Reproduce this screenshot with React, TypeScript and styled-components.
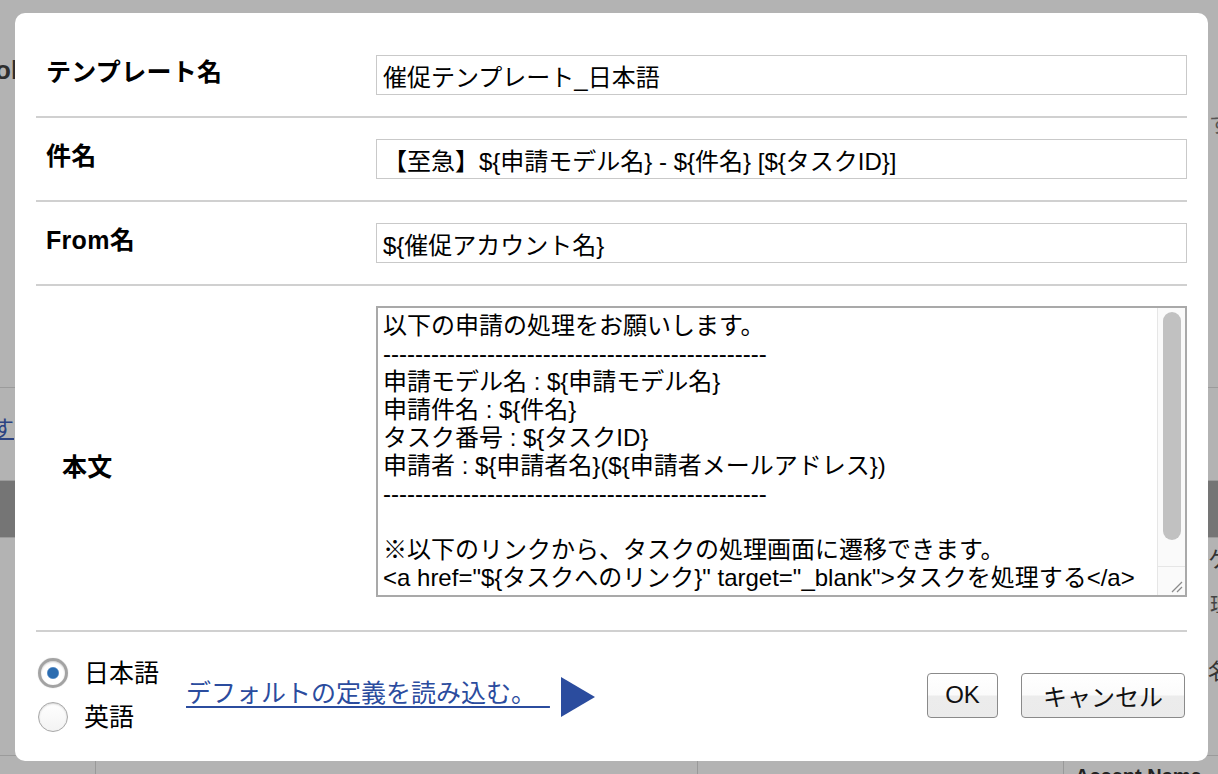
import React from "react";
import styled, { createGlobalStyle } from "styled-components";

const GlobalStyle = createGlobalStyle`
  html, body { margin: 0; padding: 0; }
  body {
    width: 1218px;
    height: 774px;
    overflow: hidden;
    background: #b3b3b3;
    font-family: "Liberation Sans", "Noto Sans CJK JP", sans-serif;
  }
  * { box-sizing: border-box; }
`;

const FONT = `"Liberation Sans", "Noto Sans CJK JP", sans-serif`;

const Screen = styled.div`
  position: relative;
  width: 1218px;
  height: 774px;
  overflow: hidden;
  background: #b3b3b3;
`;

/* ---------- dimmed page behind the dialog ---------- */

const BackPage = styled.div`
  display: flex;
  flex-direction: column;
  width: 100%;
  height: 100%;
`;

const BackSection = styled.div<{ $h: number; $dark?: boolean }>`
  flex: none;
  height: ${(p) => p.$h}px;
  display: flex;
  justify-content: space-between;
  align-items: flex-start;
  border-bottom: 1px solid #9b9b9b;
  background: ${(p) => (p.$dark ? "#757575" : "transparent")};
`;

const BackColumn = styled.div<{ $align: string }>`
  display: flex;
  flex-direction: column;
  align-items: ${(p) => p.$align};
`;

const BackText = styled.span<{
  $m: string;
  $size?: number;
  $bold?: boolean;
  $color?: string;
  $link?: boolean;
}>`
  display: block;
  margin: ${(p) => p.$m};
  font-family: ${FONT};
  font-size: ${(p) => p.$size ?? 22}px;
  line-height: 1;
  font-weight: ${(p) => (p.$bold ? 700 : 400)};
  color: ${(p) => p.$color ?? "#4a4a4a"};
  text-decoration: ${(p) => (p.$link ? "underline" : "none")};
  white-space: nowrap;
`;

const BackTableHead = styled.div`
  flex: 1;
  display: grid;
  grid-template-columns: 95px 602px 366px 1fr;
`;

const BackCell = styled.div<{ $first?: boolean }>`
  border-left: ${(p) => (p.$first ? "none" : "1px solid #999")};
  padding: 9px 0 0 11px;
  font-family: ${FONT};
  font-size: 20px;
  font-weight: 700;
  color: #222;
  white-space: nowrap;
`;

/* ---------- dialog ---------- */

const Dialog = styled.div`
  position: absolute;
  left: 15px;
  top: 13px;
  width: 1193px;
  height: 748px;
  background: #fff;
  border-radius: 10px;
  padding: 21px 21px 0 21px;
  display: flex;
  flex-direction: column;
`;

const FieldRow = styled.div<{ $pt: number; $pb: number }>`
  display: grid;
  grid-template-columns: 340px 1fr;
  align-items: center;
  padding: ${(p) => p.$pt}px 0 ${(p) => p.$pb}px;
  border-bottom: 2px solid #d0d0d0;
`;

const Label = styled.div<{ $indent?: number; $shift?: number }>`
  padding-left: ${(p) => p.$indent ?? 10}px;
  margin-top: ${(p) => p.$shift ?? -6}px;
  font-family: ${FONT};
  font-size: 25px;
  letter-spacing: 0.3px;
  line-height: 30px;
  font-weight: 700;
  color: #000;
`;

const TextInput = styled.input`
  display: block;
  width: 100%;
  height: 40px;
  margin: 0;
  padding: 0 6px;
  border: 1px solid #c9c9c9;
  border-radius: 0;
  background: #fff;
  font-family: ${FONT};
  font-size: 24px;
  color: #000;
  outline: none;
`;

const BodyBox = styled.div`
  display: flex;
  height: 291px;
  border: 2px solid #a9a9a9;
  background: #fff;
`;

const BodyArea = styled.textarea`
  flex: 1;
  min-width: 0;
  height: 100%;
  margin: 0;
  padding: 4px 5px;
  border: none;
  background: transparent;
  font-family: ${FONT};
  font-size: 24px;
  line-height: 28px;
  color: #000;
  resize: none;
  overflow: hidden;
  white-space: pre;
  outline: none;
`;

const ScrollRail = styled.div`
  flex: none;
  width: 28px;
  display: flex;
  flex-direction: column;
  background: #fafafa;
  border-left: 1px solid #e6e6e6;
`;

const ScrollTrack = styled.div`
  flex: 1;
  padding: 4px 4px 0 5px;
`;

const ScrollThumb = styled.div`
  height: 228px;
  border-radius: 9px;
  background: #c1c1c1;
`;

const ResizeCorner = styled.div`
  flex: none;
  height: 29px;
  border-top: 1px solid #e6e6e6;
  display: flex;
  align-items: flex-end;
  justify-content: flex-end;
  padding: 0 2px 2px 0;
`;

const Footer = styled.div`
  flex: 1;
  display: flex;
  align-items: center;
  justify-content: space-between;
  padding: 0 2px 3px 2px;
`;

const FooterLeft = styled.div`
  display: flex;
  align-items: center;
`;

const RadioGroup = styled.div`
  display: flex;
  flex-direction: column;
  gap: 14px;
`;

const RadioItem = styled.label`
  display: flex;
  align-items: center;
  gap: 16px;
  font-family: ${FONT};
  font-size: 25px;
  line-height: 30px;
  color: #000;
`;

const RadioInput = styled.input`
  appearance: none;
  -webkit-appearance: none;
  margin: 0;
  width: 30px;
  height: 30px;
  border-radius: 50%;
  border: 1px solid #a8a8a8;
  background: linear-gradient(#ffffff, #f3f3f3);
  box-shadow: inset 0 1px 2px rgba(0, 0, 0, 0.18);

  &:checked {
    border: 3px solid #a3a3a3;
    background: radial-gradient(circle, #2b6cb0 0 5px, #5a8fc8 5.5px, #ffffff 6.5px);
    box-shadow: inset 0 1px 2px rgba(0, 0, 0, 0.2), 0 0 1px rgba(0, 0, 0, 0.3);
  }
`;

const DefaultLink = styled.a`
  margin-left: 27px;
  margin-top: -4px;
  font-family: ${FONT};
  font-size: 25px;
  line-height: 30px;
  color: #2b4c9e;
  text-decoration: underline;
  text-underline-offset: 4px;
  text-decoration-thickness: 2px;
  white-space: pre;
  cursor: pointer;
`;

const PlayIcon = styled.svg`
  margin-left: 11px;
  margin-top: 4px;
  flex: none;
`;

const ButtonGroup = styled.div`
  display: flex;
  align-items: center;
  gap: 23px;
`;

const Button = styled.button<{ $w: number }>`
  width: ${(p) => p.$w}px;
  height: 45px;
  margin: 0;
  padding: 0;
  border: 1px solid #8a8a8a;
  border-radius: 4px;
  background: linear-gradient(#ffffff 0%, #fbfbfb 48%, #ececec 52%, #ebebeb 100%);
  font-family: ${FONT};
  font-size: 24px;
  color: #111;
  cursor: pointer;
`;

const BODY_TEXT = [
  "以下の申請の処理をお願いします。",
  "------------------------------------------------",
  "申請モデル名 : ${申請モデル名}",
  "申請件名 : ${件名}",
  "タスク番号 : ${タスクID}",
  "申請者 : ${申請者名}(${申請者メールアドレス})",
  "------------------------------------------------",
  "",
  "※以下のリンクから、タスクの処理画面に遷移できます。",
  '<a href="${タスクへのリンク}" target="_blank">タスクを処理する</a>',
  "",
].join("\n");

export default function App() {
  return (
    <>
      <GlobalStyle />
      <Screen>
        <BackPage>
          <BackSection $h={388}>
            <BackColumn $align="flex-start">
              <BackText $m="57px 0 0 -5px" $size={26} $bold $color="#2e2e2e">
                ol
              </BackText>
            </BackColumn>
            <BackColumn $align="flex-end">
              <BackText $m="114px -13px 0 0" $size={22} $color="#555">
                す
              </BackText>
            </BackColumn>
          </BackSection>
          <BackSection $h={93}>
            <BackColumn $align="flex-start">
              <BackText $m="30px 0 0 -8px" $size={22} $color="#2c4382" $link>
                す
              </BackText>
            </BackColumn>
          </BackSection>
          <BackSection $h={57} $dark />
          <BackSection $h={218}>
            <BackColumn $align="flex-start">
              <BackText $m="100px 0 0 -8px" $size={24} $color="#333">
                )
              </BackText>
            </BackColumn>
            <BackColumn $align="flex-end">
              <BackText $m="11px -12px 0 0" $size={22} $color="#333">
                ケ
              </BackText>
              <BackText $m="24px -12px 0 0" $size={20} $color="#444">
                理
              </BackText>
              <BackText $m="46px -12px 0 0" $size={22} $color="#333">
                名
              </BackText>
              <BackText $m="20px -14px 0 0" $size={24} $color="#333">
                (
              </BackText>
            </BackColumn>
          </BackSection>
          <BackTableHead>
            <BackCell $first />
            <BackCell />
            <BackCell />
            <BackCell>Accept Name</BackCell>
          </BackTableHead>
        </BackPage>

        <Dialog>
          <FieldRow $pt={21} $pb={21}>
            <Label>テンプレート名</Label>
            <TextInput defaultValue="催促テンプレート_日本語" />
          </FieldRow>
          <FieldRow $pt={21} $pb={21}>
            <Label>件名</Label>
            <TextInput defaultValue="【至急】${申請モデル名} - ${件名} [${タスクID}]" />
          </FieldRow>
          <FieldRow $pt={21} $pb={21}>
            <Label>From名</Label>
            <TextInput defaultValue="${催促アカウント名}" />
          </FieldRow>
          <FieldRow $pt={20} $pb={33}>
            <Label $indent={26} $shift={30}>
              本文
            </Label>
            <BodyBox>
              <BodyArea defaultValue={BODY_TEXT} spellCheck={false} />
              <ScrollRail>
                <ScrollTrack>
                  <ScrollThumb />
                </ScrollTrack>
                <ResizeCorner>
                  <svg width="12" height="12" viewBox="0 0 12 12">
                    <line x1="1" y1="11" x2="11" y2="1" stroke="#8a8a8a" strokeWidth="1.2" />
                    <line x1="6" y1="11" x2="11" y2="6" stroke="#8a8a8a" strokeWidth="1.2" />
                  </svg>
                </ResizeCorner>
              </ScrollRail>
            </BodyBox>
          </FieldRow>
          <Footer>
            <FooterLeft>
              <RadioGroup>
                <RadioItem>
                  <RadioInput type="radio" name="lang" defaultChecked />
                  日本語
                </RadioItem>
                <RadioItem>
                  <RadioInput type="radio" name="lang" />
                  英語
                </RadioItem>
              </RadioGroup>
              <DefaultLink>{"デフォルトの定義を読み込む。\u00a0\u00a0"}</DefaultLink>
              <PlayIcon width="34" height="40" viewBox="0 0 34 40">
                <polygon points="0,0 34,20 0,40" fill="#2b4c9e" />
              </PlayIcon>
            </FooterLeft>
            <ButtonGroup>
              <Button $w={71}>OK</Button>
              <Button $w={164}>キャンセル</Button>
            </ButtonGroup>
          </Footer>
        </Dialog>
      </Screen>
    </>
  );
}
